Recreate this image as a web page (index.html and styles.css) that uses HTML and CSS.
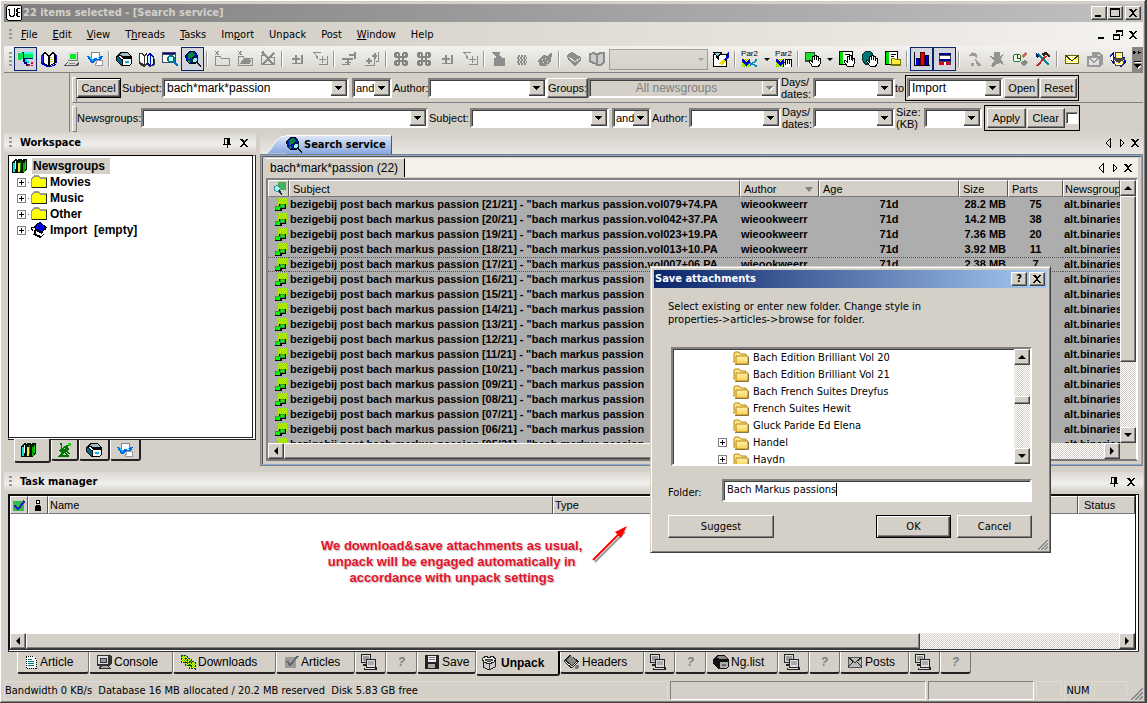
FILE: index.html
```html
<!DOCTYPE html>
<html lang="en">
<head>
<meta charset="utf-8">
<title>22 items selected - [Search service]</title>
<link rel="stylesheet" href="styles.css">
</head>
<body>
<svg class="defs" width="0" height="0" aria-hidden="true">
<defs>
<pattern id="dots" width="2" height="2" patternUnits="userSpaceOnUse"><rect width="2" height="2" fill="#ff0"/><path d="M0 0h1v1H0zM1 1h1v1H1z" fill="#5c0"/></pattern>
<pattern id="greendots" width="2" height="2" patternUnits="userSpaceOnUse"><rect width="2" height="2" fill="#2b4"/><path d="M0 0h1v1H0z" fill="#8a8"/></pattern>
<pattern id="sand" width="2" height="2" patternUnits="userSpaceOnUse"><rect width="2" height="2" fill="#fff"/><path d="M0 0h1v1H0z" fill="#fe3"/></pattern>
<linearGradient id="gold" x1="0" y1="0" x2="0" y2="1"><stop offset="0" stop-color="#fff3b0"/><stop offset="1" stop-color="#f6cf50"/></linearGradient>
<linearGradient id="tabblue" x1="0" y1="0" x2="0" y2="1"><stop offset="0" stop-color="#dde6f6"/><stop offset="1" stop-color="#86a7e0"/></linearGradient>
<symbol id="i-app" viewBox="0 0 16 16"><path d="M2 0h12l2 2v12l-2 2H2l-2-2V2z" fill="#000"/><path d="M2 1h12l1 1v12l-1 1H2l-1-1V2z" fill="#fff"/><path d="M2 4h2v6h1v1h2v-1h1V3h1v8H8v1H4v-1H3V5H2zM11 3h3v1h-2v3h2v1h-2v3h2v1h-3v-1h-1V8h1V7h-1V4h1z" fill="#000"/></symbol>
<symbol id="i-tree" viewBox="0 0 16 16"><path d="M0 2h3v7H0z" fill="#0d4"/><path d="M4 1h11v7H4z" fill="#018"/><path d="M3 2h2v6H3zM6 1h9v6H6z" fill="#0e6"/><path d="M6 1h9v2H6z" fill="#3fd"/><path d="M5 8h2v3h2v2h2v2H8v-2H6v-2H5z" fill="#008"/><path d="M7 8h2v2h2v2H9v-1H7z" fill="#0dd"/><path d="M10 13h2v2h-2zM13 11h2v2h-2zM13 14h2v1h-2z" fill="#d03"/></symbol>
<symbol id="i-book" viewBox="0 0 16 16"><path d="M0 4h2v8l5 3h3l6-3V4h-1v10l-5 2H6l-6-3z" fill="#00c"/><path d="M1 3l3-2 4 3 4-3 3 2v9l-6 3H7l-6-3z" fill="#000"/><path d="M3 3h1l3 2v9l-4-2zM12 3h1v9l-4 2V5z" fill="#fff"/><path d="M9 6h2v1H9zM9 8h3v1H9zM9 10h3v1H9z" fill="#cc3"/><path d="M0 4h2v7H0z" fill="#22f"/></symbol>
<symbol id="i-pc" viewBox="0 0 16 16"><path d="M4 1h10v9H4z" fill="#777"/><path d="M4 1h9v8H4z" fill="#ddd"/><path d="M6 3h6v5H6z" fill="#0e2"/><path d="M3 11h12v2l-2 2H0l3-4z" fill="#555"/><path d="M4 11h10l-2 3H2z" fill="#ddd"/><path d="M5 12h6v1H4z" fill="#888"/></symbol>
<symbol id="i-world" viewBox="0 0 16 16"><path d="M4 1h9v8H4z" fill="#789"/><path d="M5 2h7v6H5z" fill="#fff"/><path d="M0 5h3l2 4 2-2h2l2 2 2-4h3l-3 7h-3l-2-2-2 2H4z" fill="#06e"/><path d="M2 5h1l3 5H5zM13 5h-1l-2 4z" fill="#0df"/><path d="M9 9h7v6H8v-3h1z" fill="#99a"/><path d="M10 10h5v4H9v-1h1z" fill="#fff"/></symbol>
<symbol id="i-box" viewBox="0 0 16 16"><path d="M0 6l4-5h7l5 5v7l-3 2H6l-6-5z" fill="#000"/><path d="M1 6h1l4 4v4l-5-4z" fill="#068"/><path d="M5 2h6l3 3H7L4 4z" fill="#9bc"/><path d="M2 5h2l3 3H5z" fill="#fff"/><path d="M7 8h8v4l-2 2H7z" fill="#fff"/><path d="M9 10h4v2H9z" fill="#0bd"/></symbol>
<symbol id="i-readers" viewBox="0 0 16 16"><path d="M0 2h3l2 2 3-2v6h8v6l-5 2-3-2-3 2-5-3z" fill="#333"/><path d="M1 3h1l3 2v8l-4-2zM6 5l2-1v8l-2 1z" fill="#fff"/><path d="M8 4l3-2 4 3v8l-4 2-3-2z" fill="#00b"/><path d="M9 5l2-1v9l-2-1zM12 5l2 1v7l-2 1z" fill="#cff"/></symbol>
<symbol id="i-find" viewBox="0 0 16 16"><path d="M0 1h14v11H0z" fill="#446"/><path d="M1 4h12v7H1z" fill="#fff"/><path d="M1 2h12v1H1z" fill="#008"/><circle cx="9" cy="8" r="4" fill="#077"/><circle cx="9" cy="8" r="2.500" fill="#bff"/><path d="M11 11l2-1 3 4-1 2z" fill="#06c"/></symbol>
<symbol id="i-globe" viewBox="0 0 16 16"><path d="M4 0h5l3 2 1 3v5l-3 3H4L1 10 0 4z" fill="#002"/><path d="M4 1h5l3 3v5l-3 3H4L1 9V4z" fill="#01b"/><path d="M3 3l4-2 3 2-3 4-4 1zM3 9l3 1-1 2-2-1z" fill="#083"/><circle cx="10" cy="9" r="3.500" fill="#022"/><circle cx="10" cy="9" r="2" fill="#9ef"/><path d="M11 12l2-1 3 4-1 1z" fill="#111"/></symbol>
<symbol id="g-folder" viewBox="0 0 16 16"><path d="M1 14V5h5l1 2h8v7z" fill="none" stroke="#8c8c8c"/><path d="M1 0l4 4M5 0L1 4M3 0v4" stroke="#8c8c8c"/></symbol>
<symbol id="g-folder2" viewBox="0 0 16 16"><path d="M1 14V5h5l1 2h8v7z" fill="none" stroke="#8c8c8c"/><path d="M3 13l3-5 4-1 4 2-1 4z" fill="#8c8c8c"/><path d="M1 0l4 4M5 0L1 4M3 0v4" stroke="#8c8c8c"/></symbol>
<symbol id="g-folderx" viewBox="0 0 16 16"><path d="M1 13V4h5l1 2h7v7z" fill="none" stroke="#8c8c8c"/><path d="M2 1l12 13M14 2L2 14M3 0v4" stroke="#8c8c8c" stroke-width="2"/></symbol>
<symbol id="g-plus" viewBox="0 0 16 16"><path d="M6 4h2v3h3v2H8v3H6V9H3V7h3zM12 4h2v9H3v-1h9z" fill="#8c8c8c"/></symbol>
<symbol id="g-funnelplus" viewBox="0 0 16 16"><path d="M0 1h9L6 5v3L4 7V5L0 1M2 2l3 3 3-3z" fill="#8c8c8c" fill-rule="evenodd"/><path d="M10 5h1v3h3v1h-3v3h-1V9H7V8h3zM15 5h1v9H7v-1h8z" fill="#8c8c8c"/></symbol>
<symbol id="g-rel" viewBox="0 0 16 16"><path d="M1 7h11v2H8v2h2v1H8v2H6v-2H4v-1h2V9H1zM8 3h5V1h2v7h-2V5H8zM1 13h8v1H1z" fill="#8c8c8c"/></symbol>
<symbol id="g-pluses" viewBox="0 0 16 16"><path d="M4 7h2v2h2v2H6v2H4v-2H2V9h2zM1 14h9V8h1v7H1zM10 2h2v2h1v2h-1v2h-2V6H8V4h2zM15 1v10h-3v-1h2V1z" fill="#8c8c8c"/></symbol>
<symbol id="g-clover" viewBox="0 0 16 16"><path d="M6 6V3.500A2 2 0 1 0 4 6h8a2 2 0 1 0-2-2.500V13a2 2 0 1 0 2-3H4a2 2 0 1 0 2 3z" fill="none" stroke="#858585" stroke-width="2.600"/></symbol>
<symbol id="g-bag" viewBox="0 0 16 16"><path d="M3 7h2l3-4 3 4h3v8H3z" fill="#8c8c8c"/><path d="M0 1h9v1L6 5v3H5V5z" fill="#8c8c8c"/></symbol>
<symbol id="g-noise" viewBox="0 0 16 16"><path d="M4 5h9M3 7h10M4 9h9M3 11h10M4 13h8" stroke="#8c8c8c" stroke-width="2" stroke-dasharray="2 1"/></symbol>
<symbol id="g-hand" viewBox="0 0 16 16"><path d="M1 10l3-4 3-2 4 1 3-4 1 2-1 7-4 5H3z" fill="#8c8c8c"/><path d="M5 8h1M8 7h1M6 11h1M10 10h1M9 13h1" stroke="#eee"/></symbol>
<symbol id="g-book" viewBox="0 0 16 16"><path d="M1 4l5-3 9 5v4l-6 5-7-6z" fill="#8c8c8c"/><path d="M3 6l6 5 5-4" stroke="#e5e3df" fill="none"/></symbol>
<symbol id="g-books" viewBox="0 0 16 16"><path d="M1 3l4-1 3 2v9l-4-1-3-2zM8 4l3-2h4v9l-3 3H7" fill="#ccc" stroke="#8c8c8c" stroke-width="2"/></symbol>
<symbol id="i-filteredit" viewBox="0 0 16 16"><path d="M0 3h14v13H0z" fill="#000"/><path d="M1 4h12v11H1z" fill="#fff"/><path d="M0 1h9v1L6 5v4L3 7V5L0 2z" fill="#000"/><path d="M2 2h5L5 5H4z" fill="#7dd"/><path d="M8 12l5-6 2-5h1v5l-4 5z" fill="#01c"/><path d="M6 13l4-5 3 2-3 4z" fill="#ed0"/></symbol>
<symbol id="i-par" viewBox="0 0 16 9"><path d="M0 1h8v8H0z" fill="url(#dots)"/><path d="M1 1l3 3 3-3h1v3L4 8 0 4V1z" fill="#00d"/><path d="M8 5l7 3M8 7l7-5" stroke="#08a" stroke-width="1.500"/><path d="M13 1h2v2h-2zM13 7h2v2h-2z" fill="#08a"/></symbol>
<symbol id="i-par-h" viewBox="0 0 16 9"><path d="M0 1h8v8H0z" fill="url(#dots)"/><path d="M1 1l3 3 3-3h1v3L4 8 0 4V1z" fill="#00d"/><path d="M7 9V4h2V1h7v8z" fill="#000"/><path d="M8 9V5h1v2h1V2h1v4h1V2h1v4h1V2h1v7z" fill="#fff"/></symbol>
<symbol id="i-hand" viewBox="0 0 16 16"><path d="M0 1h10v10H0z" fill="#353"/><path d="M1 2h8v7H1z" fill="#2d3"/><path d="M7 15L4 10l1-1 2 2V5h2v4-5h2v5-4h2v5-3h2v6l-2 3z" fill="#fff" stroke="#000"/></symbol>
<symbol id="i-handp" viewBox="0 0 16 16"><path d="M0 0h14v14H0z" fill="#000"/><path d="M1 1h12v12H1z" fill="#fff"/><path d="M1 1h3v12H1z" fill="#0d0"/><path d="M6 3h5v1H6z" fill="#000"/><path d="M8 15L5 10l1-1 2 2V5h2v4-5h2v5-4h1v5-3h2v6l-1 3z" fill="#fff" stroke="#000"/></symbol>
<symbol id="i-handg" viewBox="0 0 16 16"><path d="M0 4l4-4 5 1 3 4-3 8-5 1-3-4z" fill="#077" stroke="#033"/><path d="M8 15L4 10l1-1 2 2V5h2v4-5h2v5-4h2v5-3h2v6l-2 3z" fill="#fff" stroke="#000"/></symbol>
<symbol id="i-pfold" viewBox="0 0 16 16"><path d="M0 0h13v14H0z" fill="#000"/><path d="M1 1h11v12H1z" fill="#fff"/><path d="M1 1h3v12H1z" fill="#0d0"/><path d="M6 3h5v1H6zM6 5h3v1H6z" fill="#000"/><path d="M6 7h3l1 1h6v7H6z" fill="#770"/><path d="M7 8h2l1 1h5v4H7z" fill="#fe3"/></symbol>
<symbol id="i-bars" viewBox="0 0 16 16"><path d="M0 1h1v13h15v1H0z" fill="#000"/><path d="M2 7h4v7H2zM11 4h4v10h-4z" fill="#003"/><path d="M2 8h3v6H2zM12 5h2v9h-2z" fill="#00c"/><path d="M6 1h5v13H6z" fill="#500"/><path d="M7 2h3v12H7z" fill="#e00"/></symbol>
<symbol id="i-pane" viewBox="0 0 16 16"><path d="M2 2h12v12H2z" fill="#446"/><path d="M3 5h10v3H3z" fill="#fff"/><path d="M2 2h12v2H2zM2 8h12v2H2z" fill="#008"/><path d="M3 11h10v3H3z" fill="#d01"/><path d="M7 11h2v3H7z" fill="#fff"/></symbol>
<symbol id="g-net" viewBox="0 0 16 16"><path d="M2 5l4-4 5 2v4l-3-2zM9 7l5 6h-4zM5 12h3v3H5zM11 13h4v2h-4z" fill="#a09c98"/></symbol>
<symbol id="g-bug" viewBox="0 0 16 16"><path d="M5 1h6v4l4-2-3 5 1 2 2 4-4-2-3 1-4 3-2-1 3-5-4-5 4 1z" fill="#929292"/></symbol>
<symbol id="i-clock" viewBox="0 0 16 16"><circle cx="5" cy="7" r="4.500" fill="#272"/><circle cx="5" cy="7" r="3.500" fill="#efe"/><path d="M5 4h1v3h2v1H5z" fill="#a00"/><path d="M10 4l4-3 1 2-4 4z" fill="#c66"/><path d="M8 12l5-3 3 3-4 3z" fill="#888"/></symbol>
<symbol id="i-tools" viewBox="0 0 16 16"><path d="M3 3l11 11" stroke="#089" stroke-width="2"/><path d="M11 5L2 15" stroke="#a33" stroke-width="2"/><path d="M7 2l4-1 4 4-1 2-3-3-3 1z" fill="#321"/><path d="M1 2l3 3-1 2-2-1z" fill="#026"/></symbol>
<symbol id="i-mail" viewBox="0 0 16 16"><path d="M1 4h14v9H1z" fill="#660"/><path d="M2 5h12v7H2z" fill="url(#sand)"/><path d="M1 4l7 6 7-6" fill="none" stroke="#330"/></symbol>
<symbol id="g-mail" viewBox="0 0 16 16"><path d="M5 2h7l3 3v8h-2M1 6h12v9H1zM1 6l6 5 6-5M6 2v5M9 1v5M7 4h4" fill="none" stroke="#999" stroke-width="1.500"/></symbol>
<symbol id="i-mails" viewBox="0 0 16 16"><path d="M0 4l4-3v5l11 0 1 6-5 4-9-4z" fill="#00a"/><path d="M1 5l2-2v7l-2-1z" fill="#fff"/><path d="M5 1h8v7H5z" fill="#444"/><path d="M6 2h6v5H6z" fill="url(#sand)"/><path d="M3 7h12l-2 8H5z" fill="#444"/><path d="M4 9l5 3 5-3-2 5H6z" fill="url(#sand)"/></symbol>
<symbol id="i-books" viewBox="0 0 16 16"><path d="M0 4l3-3h2v1l2-1h3v1l2-1h3v10l-4 4H0z" fill="#010"/><path d="M1 5h2v9H1z" fill="#1dd"/><path d="M3 3h1v8H3z" fill="#fff"/><path d="M6 5h2v9H6z" fill="#ee4"/><path d="M8 3h1v9H8z" fill="#080"/><path d="M11 5h2v9h-2z" fill="#0a0"/><path d="M13 3h1v8h-1z" fill="#0d0"/></symbol>
<symbol id="i-folder" viewBox="0 0 16 16"><path d="M0 4l3-3h4l2 2h7v11H0z" fill="#998"/><path d="M1 5l2-2h4l2 2h6v8H1z" fill="#ff0"/><path d="M1 14h15V4h-1v9H1z" fill="#222"/></symbol>
<symbol id="i-import" viewBox="0 0 16 16"><path d="M5 2l4-2 7 5-4 9-3 2-6-3-2-5z" fill="#000"/><path d="M6 2l3-1 5 4-3 5-6-3z" fill="#00e"/><path d="M5 9l6 3 3-5v3l-4 4-5-2z" fill="#fff"/><path d="M0 5h5v3l-1 1v4H2V8H0z" fill="#000"/><path d="M1 6h3v2H3v4H2V7H1z" fill="#fff"/></symbol>
<symbol id="i-sat" viewBox="0 0 16 16"><path d="M4 1l1 7 7-1M12 2l-5 8M6 10l6-3M3 8l3 3-3 3h9M8 10l3 4M12 3l-6 3M10 9l2 3" fill="none" stroke="#070" stroke-width="1.600"/><path d="M11 1h3v3h-3z" fill="#2c2"/></symbol>
<symbol id="i-msg" viewBox="0 0 16 16"><path d="M5 1h9v9H5z" fill="url(#dots)"/><path d="M6 7h7v6H9v2H2v-5h4z" fill="#000"/><path d="M7 7h5v5H7z" fill="#393"/><path d="M8 8h3v3H8z" fill="#0f0"/><path d="M2 10h5v4H2z" fill="#393"/><path d="M3 11h4v3H3z" fill="#0f0"/></symbol>
<symbol id="i-msgfind" viewBox="0 0 16 16"><path d="M6 1h8v9H6z" fill="url(#greendots)"/><circle cx="5" cy="8" r="3.500" fill="#488"/><circle cx="5" cy="8" r="2.500" fill="#9ff"/><path d="M7 10l3 5" stroke="#024" stroke-width="1.600"/></symbol>
<symbol id="i-check" viewBox="0 0 16 16"><path d="M2 3h11v11H2z" fill="url(#greendots)"/><path d="M3 8l4 4 7-9" fill="none" stroke="#22b" stroke-width="2.400"/></symbol>
<symbol id="i-info" viewBox="0 0 16 16"><path d="M6 2h4v4H6zM5 7h5v1H9v1h2v5H5V9h1z" fill="#000"/><path d="M7 3h2v2H7z" fill="#fff"/></symbol>
<symbol id="i-pin" viewBox="0 0 10 10"><path d="M2 0h6v6h1v1H6v3H5V7H1V6h1zM3 1v5h2V1z" fill="#000" fill-rule="evenodd"/></symbol>
<symbol id="i-x" viewBox="0 0 8 8"><path d="M0 0h2l2 2 2-2h2L5 4l3 4H6L4 5 2 8H0l3-4z" fill="#000"/></symbol>
<symbol id="i-lt" viewBox="0 0 10 10"><path d="M7 1v8L3 5z" fill="none" stroke="#000"/></symbol>
<symbol id="i-gt" viewBox="0 0 10 10"><path d="M3 1v8l4-4z" fill="none" stroke="#000"/></symbol>
<symbol id="i-min" viewBox="0 0 10 10"><path d="M1 7h6v2H1z" fill="#000"/></symbol>
<symbol id="i-max" viewBox="0 0 10 10"><path d="M0 0h10v9H0zM1 2v6h8V2z" fill="#000" fill-rule="evenodd"/></symbol>
<symbol id="i-rest" viewBox="0 0 10 10"><path d="M3 0h7v6H8V5h1V2H4v1H3zM0 4h7v6H0zM1 6v3h5V6z" fill="#000" fill-rule="evenodd"/></symbol>
<symbol id="i-doc" viewBox="0 0 16 16"><path d="M3 2h7l3 3v9H3z" fill="#fff" stroke="#000" stroke-dasharray="1 1"/><path d="M5 5h4M5 7h6M5 9h6M5 11h6" stroke="#077"/></symbol>
<symbol id="i-mon" viewBox="0 0 16 16"><path d="M1 1h12l3 1v8l-3 2 2 3H3l1-3H1z" fill="#333"/><path d="M2 2h10v8H2z" fill="#ddd"/><path d="M4 4h7v5H4z" fill="#333"/><path d="M5 5h5v3H5z" fill="#99a"/><path d="M6 12h6l1 2H5z" fill="#aaa"/></symbol>
<symbol id="i-dl" viewBox="0 0 16 16"><path d="M1 1l6 1v7l-6-1zM5 4l6 1v7l-6-1zM9 7l6 1v7l-6-1z" fill="url(#dots)" stroke="#043" stroke-dasharray="2 1"/></symbol>
<symbol id="i-gcheck" viewBox="0 0 16 16"><path d="M2 3h11v11H2z" fill="#9a9a9a"/><path d="M4 7l3 4 8-9" fill="none" stroke="#666" stroke-width="2"/></symbol>
<symbol id="i-nets" viewBox="0 0 16 16"><path d="M0 0h10v9H0zM2 10h3v2H2z" fill="#222"/><path d="M1 1h8v7H1z" fill="#ddd"/><path d="M2 2h6v5H2z" fill="#999"/><path d="M5 5h10v8h1v3H3v-2h2z" fill="#222"/><path d="M6 6h8v7H6z" fill="#ddd"/><path d="M7 7h6v4H7z" fill="#aaa"/><path d="M4 14h10v1H4z" fill="#ddd"/></symbol>
<symbol id="i-save" viewBox="0 0 16 16"><path d="M1 1h14v14H1z" fill="#222"/><path d="M4 2h8v6H4z" fill="#eee"/><path d="M5 3h6v1H5zM5 5h6v1H5z" fill="#777"/><path d="M4 10h7v4H4z" fill="#aaa"/></symbol>
<symbol id="i-unpack" viewBox="0 0 16 16"><path d="M2 6l6 3 6-3v6l-6 3-6-3z" fill="#ccc" stroke="#222"/><path d="M1 4l4-3 3 2 3-2 4 3-2 3-5 2-5-2z" fill="#eee" stroke="#222"/><path d="M4 5l4-1 4 1-4 2zM8 9v6" fill="#888" stroke="#444"/></symbol>
<symbol id="i-head" viewBox="0 0 16 16"><path d="M0 6l6-5 9 6-6 7H7L0 8z" fill="#222"/><path d="M2 6l5-4 6 5-5 4z" fill="#888"/><path d="M1 7l7 5 5-4v1l-5 4-7-5z" fill="#eee"/><circle cx="13" cy="13" r="2" fill="#777"/></symbol>
<symbol id="i-env" viewBox="0 0 16 16"><path d="M1 3h14v11H1z" fill="#555"/><path d="M2 4h12v9H2z" fill="#bbb"/><path d="M1 3l7 6 7-6M1 13l5-5M15 13l-5-5" fill="none" stroke="#222"/></symbol>
<symbol id="i-ghost-box" viewBox="0 0 16 16"><path d="M0 6l4-5h7l5 5v7l-3 2H6l-6-5z" fill="#111"/><path d="M5 2h6l3 3H7L4 4z" fill="#888"/><path d="M7 8h8v4l-2 2H7z" fill="#aaa"/><path d="M9 10h4v2H9z" fill="#666"/></symbol>
<symbol id="i-gold" viewBox="0 0 16 14"><path d="M1 12V2l1-1h4l2 2h5v2" fill="#fbe48a" stroke="#b8860b"/><path d="M3 13V5h12v8z" fill="url(#gold)" stroke="#b8860b"/><path d="M2 13.500h13.500V6" fill="none" stroke="#8a7640"/></symbol>
</defs>
</svg>

<div class="window">
  <header class="titlebar">
    <svg class="ic"><use href="#i-app"/></svg>
    <h1>22 items selected - [Search service]</h1>
    <div class="winbtns">
      <button class="wb" aria-label="Minimize"><svg><use href="#i-min"/></svg></button>
      <button class="wb" aria-label="Maximize"><svg><use href="#i-max"/></svg></button>
      <button class="wb wb-close" aria-label="Close"><svg class="x"><use href="#i-x"/></svg></button>
    </div>
  </header>

  <nav class="menubar">
    <span class="grip"></span>
    <a href="#"><u>F</u>ile</a><a href="#"><u>E</u>dit</a><a href="#"><u>V</u>iew</a><a href="#">T<u>h</u>reads</a><a href="#"><u>T</u>asks</a><a href="#">Im<u>p</u>ort</a><a href="#">Unpack</a><a href="#">Post</a><a href="#"><u>W</u>indow</a><a href="#">Help</a>
    <div class="mdibtns">
      <button aria-label="Minimize document"><svg><use href="#i-min"/></svg></button>
      <button aria-label="Restore document"><svg><use href="#i-rest"/></svg></button>
      <button aria-label="Close document"><svg class="x"><use href="#i-x"/></svg></button>
    </div>
  </nav>

  <div class="toolbar" role="toolbar" aria-label="Main">
    <span class="grip"></span>
    <button class="tb on" aria-label="Workspace"><svg><use href="#i-tree"/></svg></button>
    <button class="tb" aria-label="Book"><svg><use href="#i-book"/></svg></button>
    <button class="tb" aria-label="Console"><svg><use href="#i-pc"/></svg></button>
    <button class="tb" aria-label="Web"><svg><use href="#i-world"/></svg></button>
    <span class="sep"></span>
    <button class="tb" aria-label="Box"><svg><use href="#i-box"/></svg></button>
    <button class="tb" aria-label="Readers"><svg><use href="#i-readers"/></svg></button>
    <button class="tb" aria-label="Find"><svg><use href="#i-find"/></svg></button>
    <button class="tb on" aria-label="Search service"><svg><use href="#i-globe"/></svg></button>
    <span class="sep"></span>
    <button class="tb" aria-label="New folder" disabled><svg><use href="#g-folder"/></svg></button>
    <button class="tb" aria-label="Edit folder" disabled><svg><use href="#g-folder2"/></svg></button>
    <button class="tb" aria-label="Delete folder" disabled><svg><use href="#g-folderx"/></svg></button>
    <span class="sep"></span>
    <button class="tb" aria-label="Add" disabled><svg><use href="#g-plus"/></svg></button>
    <button class="tb" aria-label="Add filter" disabled><svg><use href="#g-funnelplus"/></svg></button>
    <span class="sep"></span>
    <button class="tb" aria-label="Relations" disabled><svg><use href="#g-rel"/></svg></button>
    <button class="tb" aria-label="Add all" disabled><svg><use href="#g-pluses"/></svg></button>
    <span class="sep"></span>
    <button class="tb" aria-label="Group" disabled><svg><use href="#g-clover"/></svg></button>
    <button class="tb" aria-label="Ungroup" disabled><svg><use href="#g-clover"/></svg></button>
    <button class="tb" aria-label="Add item" disabled><svg><use href="#g-plus"/></svg></button>
    <button class="tb" aria-label="Add item filter" disabled><svg><use href="#g-funnelplus"/></svg></button>
    <span class="sep"></span>
    <button class="tb" aria-label="Bag" disabled><svg><use href="#g-bag"/></svg></button>
    <button class="tb" aria-label="Noise" disabled><svg><use href="#g-noise"/></svg></button>
    <button class="tb" aria-label="Grab" disabled><svg><use href="#g-hand"/></svg></button>
    <span class="sep"></span>
    <button class="tb" aria-label="Headers" disabled><svg><use href="#g-book"/></svg></button>
    <button class="tb" aria-label="Bodies" disabled><svg><use href="#g-books"/></svg></button>
    <select class="tbselect" aria-label="Filter" disabled><option></option></select>
    <button class="tb" aria-label="Edit filter"><svg><use href="#i-filteredit"/></svg></button>
    <span class="sep"></span>
    <button class="tb par"><span>Par2</span><svg><use href="#i-par"/></svg></button>
    <button class="drop" aria-label="Par2 options"></button>
    <button class="tb par"><span>Par2</span><svg><use href="#i-par-h"/></svg></button>
    <span class="sep"></span>
    <button class="tb" aria-label="Stop"><svg><use href="#i-hand"/></svg></button>
    <button class="drop" aria-label="Stop options"></button>
    <button class="tb" aria-label="Stop page"><svg><use href="#i-handp"/></svg></button>
    <button class="tb" aria-label="Stop all"><svg><use href="#i-handg"/></svg></button>
    <button class="tb" aria-label="Open folder"><svg><use href="#i-pfold"/></svg></button>
    <span class="sep"></span>
    <button class="tb on" aria-label="Statistics"><svg><use href="#i-bars"/></svg></button>
    <button class="tb on" aria-label="Task pane"><svg><use href="#i-pane"/></svg></button>
    <span class="sep"></span>
    <button class="tb" aria-label="Network" disabled><svg><use href="#g-net"/></svg></button>
    <button class="tb" aria-label="Debug" disabled><svg><use href="#g-bug"/></svg></button>
    <button class="tb" aria-label="Schedule"><svg><use href="#i-clock"/></svg></button>
    <button class="tb" aria-label="Settings"><svg><use href="#i-tools"/></svg></button>
    <span class="sep"></span>
    <button class="tb" aria-label="Mail"><svg><use href="#i-mail"/></svg></button>
    <button class="tb" aria-label="Forward" disabled><svg><use href="#g-mail"/></svg></button>
    <button class="tb" aria-label="Mail book"><svg><use href="#i-mails"/></svg></button>
    <button class="more" aria-label="More"><svg viewBox="0 0 10 22"><path d="M1 3v4l3-2zM5 3v4l3-2z" fill="#000"/><path d="M3 14h6v1H3zM4 17h5l-3 3z" fill="#fff"/><path d="M2 13h6v1H2zM2 16h6l-3 3z" fill="#000"/></svg></button>
  </div>

  <form class="bands">
    <div class="band band1">
      <button type="button" class="btn default">Cancel</button>
      <label for="subj1">Subject:</label>
      <select id="subj1" class="combo"><option>bach*mark*passion</option></select>
      <select class="combo and" aria-label="Operator"><option>and</option></select>
      <label for="auth1">Author:</label>
      <select id="auth1" class="combo"><option></option></select>
      <button type="button" class="btn">Groups:</button>
      <select class="combo off" aria-label="Groups" disabled><option>All newsgroups</option></select>
      <label for="days1">Days/<br>dates:</label>
      <select id="days1" class="combo"><option></option></select>
      <span class="to">to</span>
      <div class="boxed">
        <select class="combo grow" aria-label="Preset"><option>Import</option></select>
        <button type="button" class="btn">Open</button>
        <button type="button" class="btn">Reset</button>
      </div>
    </div>
    <div class="band band2">
      <label for="news">Newsgroups:</label>
      <select id="news" class="combo"><option></option></select>
      <label for="subj2">Subject:</label>
      <select id="subj2" class="combo"><option></option></select>
      <select class="combo and" aria-label="Operator"><option>and</option></select>
      <label for="auth2">Author:</label>
      <select id="auth2" class="combo"><option></option></select>
      <label for="days2">Days/<br>dates:</label>
      <select id="days2" class="combo"><option></option></select>
      <label for="size">Size:<br>(KB)</label>
      <select id="size" class="combo"><option></option></select>
      <div class="boxed">
        <button type="button" class="btn grow">Apply</button>
        <button type="button" class="btn grow">Clear</button>
        <input type="checkbox" class="chk" aria-label="Auto apply">
      </div>
    </div>
  </form>

  <main class="work">
    <section class="side">
      <div class="panehead"><span class="grip"></span><h2>Workspace</h2>
        <button aria-label="Pin"><svg><use href="#i-pin"/></svg></button><button aria-label="Close pane"><svg class="x"><use href="#i-x"/></svg></button></div>
      <div class="treebox">
        <ul class="tree">
          <li class="root"><svg class="ic"><use href="#i-books"/></svg><span class="sel">Newsgroups</span></li>
          <li><button class="exp" aria-label="Expand Movies"></button><i class="twig"></i><svg class="ic"><use href="#i-folder"/></svg><span>Movies</span></li>
          <li><button class="exp" aria-label="Expand Music"></button><i class="twig"></i><svg class="ic"><use href="#i-folder"/></svg><span>Music</span></li>
          <li><button class="exp" aria-label="Expand Other"></button><i class="twig"></i><svg class="ic"><use href="#i-folder"/></svg><span>Other</span></li>
          <li><button class="exp" aria-label="Expand Import"></button><i class="twig"></i><svg class="ic"><use href="#i-import"/></svg><span>Import&nbsp; [empty]</span></li>
        </ul>
      </div>
      <div class="sidetabs">
        <button class="stab active" aria-label="Newsgroups"><svg class="ic"><use href="#i-books"/></svg></button>
        <button class="stab narrow" aria-label="Servers"><svg class="ic"><use href="#i-sat"/></svg></button>
        <button class="stab" aria-label="Boxes"><svg class="ic"><use href="#i-box"/></svg></button>
        <button class="stab" aria-label="Web"><svg class="ic"><use href="#i-world"/></svg></button>
      </div>
    </section>

    <section class="doc">
      <div class="doctabs">
        <button class="doctab"><svg class="slope" viewBox="0 0 22 20"><path d="M0 20C8 16 10 1 20 1h2v19z" fill="url(#tabblue)"/><path d="M0 20C8 16 10 1 20 1h2" fill="none" stroke="#fff"/></svg><span class="doctab-body"><svg class="ic"><use href="#i-globe"/></svg><span>Search service</span></span></button>
        <div class="navs"><button aria-label="Previous"><svg><use href="#i-lt"/></svg></button><button aria-label="Next"><svg><use href="#i-gt"/></svg></button><button aria-label="Close tab"><svg class="x"><use href="#i-x"/></svg></button></div>
      </div>
      <div class="docframe">
        <div class="subtabs">
          <button class="subtab">bach*mark*passion (22)</button>
          <div class="navs"><button aria-label="Previous search"><svg><use href="#i-lt"/></svg></button><button aria-label="Next search"><svg><use href="#i-gt"/></svg></button><button aria-label="Close search"><svg class="x"><use href="#i-x"/></svg></button></div>
        </div>
        <div class="listbox">
          <div class="rows">
            <table class="articles">
              <colgroup><col class="c-ic"><col class="c-sub"><col class="c-aut"><col class="c-age"><col class="c-size"><col class="c-parts"><col></colgroup>
              <thead><tr><th><svg class="ic"><use href="#i-msgfind"/></svg></th><th>Subject</th><th class="sorted">Author</th><th>Age</th><th>Size</th><th>Parts</th><th>Newsgroups</th></tr></thead>
              <tbody>
                <tr><td><svg class="ic"><use href="#i-msg"/></svg></td><td>bezigebij post bach markus passion [21/21] - "bach markus passion.vol079+74.PA</td><td>wieookweerr</td><td>71d</td><td>28.2 MB</td><td>75</td><td>alt.binaries</td></tr>
                <tr><td><svg class="ic"><use href="#i-msg"/></svg></td><td>bezigebij post bach markus passion [20/21] - "bach markus passion.vol042+37.PA</td><td>wieookweerr</td><td>71d</td><td>14.2 MB</td><td>38</td><td>alt.binaries</td></tr>
                <tr><td><svg class="ic"><use href="#i-msg"/></svg></td><td>bezigebij post bach markus passion [19/21] - "bach markus passion.vol023+19.PA</td><td>wieookweerr</td><td>71d</td><td>7.36 MB</td><td>20</td><td>alt.binaries</td></tr>
                <tr><td><svg class="ic"><use href="#i-msg"/></svg></td><td>bezigebij post bach markus passion [18/21] - "bach markus passion.vol013+10.PA</td><td>wieookweerr</td><td>71d</td><td>3.92 MB</td><td>11</td><td>alt.binaries</td></tr>
                <tr class="focus"><td><svg class="ic"><use href="#i-msg"/></svg></td><td>bezigebij post bach markus passion [17/21] - "bach markus passion.vol007+06.PA</td><td>wieookweerr</td><td>71d</td><td>2.38 MB</td><td>7</td><td>alt.binaries</td></tr>
                <tr><td><svg class="ic"><use href="#i-msg"/></svg></td><td>bezigebij post bach markus passion [16/21] - "bach markus passion</td><td></td><td></td><td></td><td></td><td>alt.binaries</td></tr>
                <tr><td><svg class="ic"><use href="#i-msg"/></svg></td><td>bezigebij post bach markus passion [15/21] - "bach markus passion</td><td></td><td></td><td></td><td></td><td>alt.binaries</td></tr>
                <tr><td><svg class="ic"><use href="#i-msg"/></svg></td><td>bezigebij post bach markus passion [14/21] - "bach markus passion</td><td></td><td></td><td></td><td></td><td>alt.binaries</td></tr>
                <tr><td><svg class="ic"><use href="#i-msg"/></svg></td><td>bezigebij post bach markus passion [13/21] - "bach markus passion</td><td></td><td></td><td></td><td></td><td>alt.binaries</td></tr>
                <tr><td><svg class="ic"><use href="#i-msg"/></svg></td><td>bezigebij post bach markus passion [12/21] - "bach markus passion</td><td></td><td></td><td></td><td></td><td>alt.binaries</td></tr>
                <tr><td><svg class="ic"><use href="#i-msg"/></svg></td><td>bezigebij post bach markus passion [11/21] - "bach markus passion</td><td></td><td></td><td></td><td></td><td>alt.binaries</td></tr>
                <tr><td><svg class="ic"><use href="#i-msg"/></svg></td><td>bezigebij post bach markus passion [10/21] - "bach markus passion</td><td></td><td></td><td></td><td></td><td>alt.binaries</td></tr>
                <tr><td><svg class="ic"><use href="#i-msg"/></svg></td><td>bezigebij post bach markus passion [09/21] - "bach markus passion</td><td></td><td></td><td></td><td></td><td>alt.binaries</td></tr>
                <tr><td><svg class="ic"><use href="#i-msg"/></svg></td><td>bezigebij post bach markus passion [08/21] - "bach markus passion</td><td></td><td></td><td></td><td></td><td>alt.binaries</td></tr>
                <tr><td><svg class="ic"><use href="#i-msg"/></svg></td><td>bezigebij post bach markus passion [07/21] - "bach markus passion</td><td></td><td></td><td></td><td></td><td>alt.binaries</td></tr>
                <tr><td><svg class="ic"><use href="#i-msg"/></svg></td><td>bezigebij post bach markus passion [06/21] - "bach markus passion</td><td></td><td></td><td></td><td></td><td>alt.binaries</td></tr>
                <tr><td><svg class="ic"><use href="#i-msg"/></svg></td><td>bezigebij post bach markus passion [05/21] - "bach markus passion</td><td></td><td></td><td></td><td></td><td>alt.binaries</td></tr>
              </tbody>
            </table>
          </div>
          <div class="vbar"><button class="sb up" aria-label="Scroll up"></button><span class="thumb vt-list"></span><button class="sb down" aria-label="Scroll down"></button></div>
          <div class="hbar"><button class="sb left" aria-label="Scroll left"></button><span class="thumb ht-list"></span><button class="sb right" aria-label="Scroll right"></button></div>
          <span class="corner"></span>
        </div>
      </div>
    </section>
  </main>

  <section class="tasks">
    <div class="panehead"><span class="grip"></span><h2>Task manager</h2>
      <button aria-label="Pin tasks"><svg><use href="#i-pin"/></svg></button><button aria-label="Close tasks"><svg class="x"><use href="#i-x"/></svg></button></div>
    <div class="taskbox">
      <table class="tasktable">
        <colgroup><col class="t-a"><col class="t-b"><col class="t-name"><col><col class="t-st"></colgroup>
        <thead><tr><th><svg class="ic"><use href="#i-check"/></svg></th><th><svg class="ic"><use href="#i-info"/></svg></th><th>Name</th><th>Type</th><th>Status</th></tr></thead>
      </table>
      <div class="taskbody">
        <p class="note">We download&amp;save attachments as usual,<br>unpack will be engaged automatically in<br>accordance with unpack settings</p>
        <svg class="arrow" viewBox="0 0 44 44"><path d="M4 38L34 8" stroke="#999" stroke-width="2" transform="translate(2 2)"/><path d="M4 38L32 10" stroke="#f00" stroke-width="2"/><path d="M38 4L26 10l6 6z" fill="#f00"/></svg>
      </div>
      <div class="hbar"><button class="sb left" aria-label="Scroll tasks left"></button><span class="thumb ht-task"></span><button class="sb right" aria-label="Scroll tasks right"></button></div>
    </div>
    <div class="bottabs">
      <button class="bt w-art"><svg class="ic"><use href="#i-doc"/></svg>Article</button>
      <button class="bt w-con"><svg class="ic"><use href="#i-mon"/></svg>Console</button>
      <button class="bt w-dl"><svg class="ic"><use href="#i-dl"/></svg>Downloads</button>
      <button class="bt w-arts"><svg class="ic"><use href="#i-gcheck"/></svg>Articles</button>
      <button class="bt w-i" aria-label="Servers"><svg class="ic"><use href="#i-nets"/></svg></button>
      <button class="bt w-i q">?</button>
      <button class="bt w-save"><svg class="ic"><use href="#i-save"/></svg>Save</button>
      <button class="bt w-unp active"><svg class="ic"><use href="#i-unpack"/></svg>Unpack</button>
      <button class="bt w-con tight"><svg class="ic"><use href="#i-head"/></svg>Headers</button>
      <button class="bt w-i" aria-label="Header servers"><svg class="ic"><use href="#i-nets"/></svg></button>
      <button class="bt w-i q">?</button>
      <button class="bt w-ng"><svg class="ic"><use href="#i-ghost-box"/></svg>Ng.list</button>
      <button class="bt w-i" aria-label="List servers"><svg class="ic"><use href="#i-nets"/></svg></button>
      <button class="bt w-i q">?</button>
      <button class="bt w-post"><svg class="ic"><use href="#i-env"/></svg>Posts</button>
      <button class="bt w-i" aria-label="Post servers"><svg class="ic"><use href="#i-nets"/></svg></button>
      <button class="bt w-i q">?</button>
    </div>
  </section>

  <footer class="status">
    <span class="sp flat main">Bandwidth 0 KB/s&nbsp; Database 16 MB allocated / 20.2 MB reserved&nbsp; Disk 5.83 GB free</span>
    <span class="sp s1"></span><span class="sp s2"></span><span class="sp flat s3"></span><span class="sp flat s4">NUM</span><span class="sp flat s5"></span>
    <svg class="sizegrip" viewBox="0 0 14 14"><path d="M1 14L14 1M5 14l9-9M9 14l5-5" stroke="#fff"/><path d="M2 14L14 2M6 14l8-8M10 14l4-4" stroke="#808080" stroke-width="1.600"/></svg>
  </footer>
</div>

<div class="dialog" role="dialog" aria-labelledby="dlgtitle">
  <div class="dlgtitle"><h2 id="dlgtitle">Save attachments</h2>
    <button class="wb">?</button><button class="wb wb-close" aria-label="Close dialog"><svg class="x"><use href="#i-x"/></svg></button></div>
  <div class="dlgbody">
    <p>Select existing or enter new folder. Change style in<br>properties-&gt;articles-&gt;browse for folder.</p>
    <div class="folders">
      <ul>
        <li><svg class="fi"><use href="#i-gold"/></svg>Bach Edition Brilliant Vol 20</li>
        <li><svg class="fi"><use href="#i-gold"/></svg>Bach Edition Brilliant Vol 21</li>
        <li><svg class="fi"><use href="#i-gold"/></svg>Bach French Suites Dreyfus</li>
        <li><svg class="fi"><use href="#i-gold"/></svg>French Suites Hewit</li>
        <li><svg class="fi"><use href="#i-gold"/></svg>Gluck Paride Ed Elena</li>
        <li class="has"><button class="exp" aria-label="Expand Handel"></button><svg class="fi"><use href="#i-gold"/></svg>Handel</li>
        <li class="has"><button class="exp" aria-label="Expand Haydn"></button><svg class="fi"><use href="#i-gold"/></svg>Haydn</li>
      </ul>
      <div class="vbar"><button class="sb up" aria-label="Folders up"></button><span class="thumb vt-dlg"></span><button class="sb down" aria-label="Folders down"></button></div>
    </div>
    <div class="frow"><label for="folder">Folder:</label><div class="field"><input id="folder" type="text" value="Bach Markus passions" size="19"><span class="caret"></span></div></div>
    <div class="dlgbtns"><button class="btn suggest">Suggest</button><button class="btn default">OK</button><button class="btn">Cancel</button></div>
  </div>
  <svg class="sizegrip dlggrip" viewBox="0 0 14 14"><path d="M1 14L14 1M5 14l9-9M9 14l5-5" stroke="#fff"/><path d="M2 14L14 2M6 14l8-8M10 14l4-4" stroke="#808080" stroke-width="1.600"/></svg>
</div>
</body>
</html>
```

FILE: styles.css
```css
:root {
  --face: #d4d0c8;
  --shadow: #808080;
  --dark: #404040;
  --ui: "DejaVu Sans Condensed", "Noto Sans", sans-serif;
  --arial: "Liberation Sans", Arial, sans-serif;
}
* { box-sizing: border-box; }
html, body { height: 100%; }
body { margin: 0; background: var(--face); font: 11px/14px var(--arial); color: #000; overflow: hidden; }
h1, h2, p, ul { margin: 0; padding: 0; font-weight: normal; }
h1, h2 { font-size: 11px; line-height: 14px; }
ul { list-style: none; }
button, select, input { font: inherit; color: inherit; margin: 0; padding: 0; border: 0; background: none; border-radius: 0; outline: none; }
svg { display: block; flex: none; shape-rendering: crispEdges; }
.defs { position: absolute; }
.ic { width: 16px; height: 16px; }
.grow { flex: 1; }

.window { height: 100vh; display: flex; flex-direction: column; padding: 4px 2px 2px 4px; border-style: solid; border-width: 0 2px 1px 0; border-color: var(--dark); box-shadow: inset 1px 1px #fff, inset -1px -1px var(--shadow); }

.titlebar { display: flex; align-items: center; flex: none; height: 18px; padding: 0 2px; background: linear-gradient(90deg, #808080, #c0c0c0); }
.titlebar h1 { flex: 1; padding-left: 1px; font-family: var(--ui); font-weight: bold; color: var(--face); white-space: nowrap; }
.winbtns { display: flex; }
.wb { width: 16px; height: 14px; display: flex; align-items: center; justify-content: center; background: var(--face); border: 1px solid; border-color: #fff var(--dark) var(--dark) #fff; box-shadow: inset -1px -1px var(--shadow); font-weight: bold; line-height: 12px; }
.wb svg { width: 10px; height: 10px; }
.wb-close { margin-left: 2px; }

.menubar { display: flex; align-items: center; flex: none; height: 24px; padding: 2px 0 0 5px; background: linear-gradient(90deg, var(--face) 20%, #e9e6e0 75%, #f5f3f0); font-family: var(--ui); }
.menubar a { color: #000; text-decoration: none; white-space: nowrap; margin-right: 15px; }
.menubar .grip { margin-right: 9px; }
.mdibtns { display: flex; align-items: center; gap: 6px; margin-left: auto; padding-right: 6px; }
.mdibtns svg { width: 10px; height: 10px; }
.grip { width: 3px; height: 12px; flex: none; background: repeating-linear-gradient(#999 0 2px, transparent 2px 4px); }

.toolbar { display: flex; align-items: center; flex: none; height: 27px; padding-left: 5px; background: linear-gradient(#f3f2ef, #d8d5ce); border-bottom: 1px solid var(--shadow); }
.toolbar .grip { margin-right: 2px; height: 14px; }
.tb { width: 23px; height: 24px; flex: none; display: flex; flex-direction: column; align-items: center; justify-content: center; border: 1px solid transparent; }
.tb svg { width: 16px; height: 16px; }
.tb.on { background: #d3d5dc; border-color: #0a246a; }
.par { justify-content: flex-start; padding-top: 1px; }
.par span { font: 8px/9px var(--arial); }
.tb.par svg { height: 9px; }
.sep { width: 2px; height: 16px; margin: 0 2px; flex: none; background: linear-gradient(90deg, #999 50%, #fff 50%); }
.drop { width: 11px; height: 24px; flex: none; display: grid; place-items: center; }
.drop::before { content: ""; border: 3px solid transparent; border-top-color: #000; border-bottom: 0; }
.tbselect { flex: none; width: 99px; height: 21px; margin: 0 1px; appearance: none; border: 1px solid var(--shadow); background: var(--face) url("data:image/svg+xml,%3Csvg xmlns='http://www.w3.org/2000/svg' width='12' height='12'%3E%3Cpath d='M3 5h6l-3 3z' fill='%23808080'/%3E%3C/svg%3E") right center no-repeat; }
.more { width: 11px; height: 25px; margin-left: auto; background: #8a8883; }
.more svg { width: 11px; height: 24px; }

.bands { flex: none; margin-left: 65px; border-left: 1px solid var(--shadow); padding-left: 6px; padding-top: 1px; }
.band { display: grid; align-items: center; height: 29px; position: relative; }
.band::before { content: ""; position: absolute; left: -4px; top: 3px; width: 3px; height: 24px; border: 1px solid; border-color: #fff var(--shadow) var(--shadow) #fff; }
.band1 { grid-template-columns: 45px 41px 187px 43px 36px 119px 41px 192px 33px 82px 10px 174px; border-bottom: 1px solid var(--shadow); }
.band2 { grid-template-columns: 65px 287px 42px 139px 42px 38px 92px 32px 82px 29px 58px 98px; }
.band label { white-space: nowrap; line-height: 12px; padding-left: 1px; }
.combo { appearance: none; height: 20px; min-width: 0; width: 100%; padding-left: 3px; font-size: 12px; border: 2px solid; border-color: var(--shadow) #fff #fff var(--shadow); box-shadow: inset 1px 1px var(--dark); background: #fff url("data:image/svg+xml,%3Csvg xmlns='http://www.w3.org/2000/svg' width='16' height='16' shape-rendering='crispEdges'%3E%3Cpath d='M0 0h16v16H0z' fill='%23404040'/%3E%3Cpath d='M0 0h15v15H0z' fill='%23808080'/%3E%3Cpath d='M0 0h14v14H0z' fill='%23fff'/%3E%3Cpath d='M1 1h13v13H1z' fill='%23d4d0c8'/%3E%3Cpath d='M4 6h7l-3.500 4z' fill='%23000'/%3E%3C/svg%3E") right center no-repeat; }
.combo.and { margin-left: 3px; width: auto; font-size: 11px; padding-left: 2px; }
.combo.off { background-color: var(--face); color: var(--shadow); text-align: center; opacity: 1; padding-right: 18px; background-image: url("data:image/svg+xml,%3Csvg xmlns='http://www.w3.org/2000/svg' width='16' height='16' shape-rendering='crispEdges'%3E%3Cpath d='M0 0h16v16H0z' fill='%23404040'/%3E%3Cpath d='M0 0h15v15H0z' fill='%23808080'/%3E%3Cpath d='M0 0h14v14H0z' fill='%23fff'/%3E%3Cpath d='M1 1h13v13H1z' fill='%23d4d0c8'/%3E%3Cpath d='M5 7h7l-3.500 4z' fill='%23fff'/%3E%3Cpath d='M4 6h7l-3.500 4z' fill='%23808080'/%3E%3C/svg%3E"); }
.to { white-space: nowrap; }
.btn { height: 20px; background: var(--face); border: 1px solid; border-color: #fff var(--dark) var(--dark) #fff; box-shadow: inset -1px -1px var(--shadow); white-space: nowrap; }
.btn.default { border-color: #000; box-shadow: inset 1px 1px #fff, inset -1px -1px var(--dark), inset -2px -2px var(--shadow); }
.boxed { display: flex; align-items: center; gap: 1px; height: 26px; padding: 1px; border: 1px solid #000; }
.boxed .btn { padding: 0 3px; }
.boxed .combo { width: 0; }
.band2 .boxed { margin-left: 2px; padding-left: 2px; }
.chk { appearance: none; width: 12px; height: 12px; background: #fff; border: 1px solid; border-color: var(--shadow) #fff #fff var(--shadow); box-shadow: inset 1px 1px var(--dark); align-self: flex-start; margin-top: 5px; }

.work { flex: 338 1 0; min-height: 0; display: flex; gap: 4px; }
.side { width: 252px; flex: none; display: flex; flex-direction: column; }
.panehead { display: flex; align-items: center; gap: 8px; flex: none; height: 19px; padding: 1px 8px 0 5px; margin-top: 1px; background: linear-gradient(#dcd9d3, #f0efec 60%, #d8d5ce); }
.panehead h2 { flex: 1; font-family: var(--ui); font-weight: bold; }
.panehead svg, .navs svg { width: 10px; height: 10px; }
svg.x, .wb svg.x, .mdibtns svg.x, .panehead svg.x, .navs svg.x { width: 8px; height: 8px; }
.treebox { flex: 1; min-height: 0; margin: 3px 0 0 4px; background: #fff; border: 1px solid #000; border-right: 4px double #222; border-bottom: 3px double #222; }
.tree { padding-top: 2px; font-weight: bold; font-size: 12px; }
.tree li { display: flex; align-items: center; height: 16px; padding-left: 8px; gap: 2px; }
.tree li.root { padding-left: 3px; gap: 4px; }
.tree li > span { padding-left: 1px; }
.tree .sel { background: var(--face); padding: 0 5px 0 1px; line-height: 16px; }
.twig { width: 1px; border-top: 1px dotted var(--shadow); }
.exp { width: 9px; height: 9px; flex: none; border: 1px solid var(--shadow); background: linear-gradient(#000, #000) center / 5px 1px no-repeat, linear-gradient(#000, #000) center / 1px 5px no-repeat #fff; }
.sidetabs { display: flex; align-items: flex-start; flex: none; height: 31px; padding-left: 10px; }
.stab { height: 21px; width: 31px; display: flex; align-items: center; justify-content: center; border: solid; border-width: 0 2px 2px 1px; border-color: #222 #222 #222 #fff; border-radius: 0 0 3px 3px; background: var(--face); }
.stab.narrow { width: 28px; }
.stab.active { width: 37px; height: 24px; margin-top: -1px; padding-right: 6px; }

.doc { flex: 1; min-width: 0; display: flex; flex-direction: column; padding-bottom: 5px; }
.doctabs { display: flex; align-items: flex-end; flex: none; height: 22px; padding: 0 4px 0 6px; background: linear-gradient(var(--face), #e9e7e3); }
.doctab { display: flex; height: 19px; }
.slope { width: 20px; height: 19px; shape-rendering: auto; }
.doctab-body { display: flex; align-items: center; gap: 2px; padding-right: 5px; height: 19px; background: linear-gradient(#dde6f6, #86a7e0); border-top: 1px solid #fff; border-right: 1px solid #555; font: bold 11px/14px var(--ui); }
.navs { margin-left: auto; display: flex; align-items: center; gap: 4px; align-self: center; }
.docframe { flex: 1; min-height: 0; display: flex; flex-direction: column; padding: 3px 4px 4px 5px; border: 1px solid var(--shadow); box-shadow: inset 0 0 0 1px #8aa8e0, inset 2px 2px #555; }
.subtabs { display: flex; align-items: center; flex: none; height: 19px; background: #f5f1e9; padding-right: 6px; }
.subtab { height: 19px; padding: 0 6px 0 4px; background: var(--face); border-right: 1px solid #000; border-top: 1px solid #fff; font-size: 12px; }
.listbox { flex: 1; min-height: 0; margin-top: 1px; display: grid; grid-template-columns: minmax(0, 1fr) 16px; grid-template-rows: minmax(0, 1fr) 16px; border: 2px solid; border-color: var(--shadow) #fff #777 var(--shadow); background: var(--face); }
.rows { overflow: hidden; background: #adadad; }
table { border-collapse: separate; border-spacing: 0; table-layout: fixed; width: 100%; }
th { height: 17px; padding: 0 0 0 3px; font-weight: normal; text-align: left; white-space: nowrap; overflow: hidden; background: var(--face); border: 1px solid; border-color: #fff #555 #777 #fff; line-height: 14px; font-size: 11px; }
th .ic { height: 15px; margin: 0 auto; }
.articles th:last-child { padding-left: 1px; }
.c-ic { width: 21px; } .c-sub { width: 451px; } .c-aut { width: 79px; } .c-age { width: 140px; } .c-size { width: 49px; } .c-parts { width: 55px; }
.sorted { position: relative; }
.sorted::after { content: ""; position: absolute; right: 5px; top: 6px; border: 4px solid transparent; border-top: 5px solid var(--shadow); border-bottom: 0; }
td { height: 15px; padding: 0 1px; font-weight: bold; font-size: 11px; line-height: 15px; white-space: nowrap; overflow: hidden; }
td:first-child { padding: 0 0 0 5px; }
td:first-child .ic { height: 15px; }
td:nth-child(4) { text-align: center; } td:nth-child(5) { text-align: right; padding-right: 2px; } td:nth-child(6) { text-align: center; }
.focus td { background: linear-gradient(90deg, #555 50%, transparent 50%) 0 0 / 2px 1px repeat-x, linear-gradient(90deg, #555 50%, transparent 50%) 0 100% / 2px 1px repeat-x; }
.vbar, .hbar { display: flex; background: repeating-conic-gradient(#fff 0 25%, var(--face) 0 50%) 0 0 / 2px 2px; }
.vbar { flex-direction: column; width: 16px; }
.hbar { height: 16px; flex: none; }
.corner { background: var(--face); }
.sb, .thumb { background-color: var(--face); border: 1px solid; border-color: #fff var(--dark) var(--dark) #fff; box-shadow: inset -1px -1px var(--shadow); }
.sb { width: 16px; height: 16px; flex: none; display: grid; place-items: center; }
.sb::before { content: ""; border: 4px solid transparent; }
.up::before { border-top: 0; border-bottom-color: #000; }
.down::before { border-bottom: 0; border-top-color: #000; }
.left::before { border-left: 0; border-right-color: #000; }
.right::before { border-right: 0; border-left-color: #000; }
.right { margin-left: auto; }
.down { margin-top: auto; }
.vt-list { height: 166px; } .ht-list { width: 72%; } .ht-task { width: 79.5%; }

.tasks { flex: 209 1 0; min-height: 0; display: flex; flex-direction: column; }
.taskbox { flex: 1; min-height: 0; margin: 3px 4px 0 4px; display: flex; flex-direction: column; background: #fff; border: 2px solid #111; border-right: 4px double #111; border-bottom: 3px double #333; }
.t-a { width: 18px; } .t-b { width: 20px; } .t-name { width: 505px; } .t-st { width: 57px; }
.tasktable { flex: none; }
.tasktable th { padding-left: 1px; height: 18px; }
.tasktable th:last-child { padding-left: 5px; }
.tasktable th:nth-child(-n+2) { padding: 0; }
.taskbody { flex: 1; position: relative; min-height: 0; }
.note { position: absolute; left: 311px; top: 24px; text-align: center; white-space: nowrap; font: bold 13px/16px var(--arial); color: #e8112d; text-shadow: 1px 1px 1px #bbb; }
.arrow { position: absolute; left: 579px; top: 8px; width: 44px; height: 44px; shape-rendering: auto; }

.bottabs { display: flex; align-items: flex-start; flex: none; height: 29px; padding-left: 13px; font-size: 12px; }
.bt { display: flex; align-items: center; gap: 2px; flex: none; height: 22px; padding-left: 6px; background: var(--face); border: solid; border-width: 0 1px 2px 1px; border-color: #000 #777 #222 #fff; border-radius: 0 0 3px 3px; white-space: nowrap; }
.bt.w-art { padding-left: 5px; gap: 1px; }
.bt.w-i { padding-left: 5px; }
.bt.active { height: 25px; font-weight: bold; padding-left: 4px; gap: 4px; margin-top: -1px; border-right: 2px solid #000; }
.bt.tight { padding-left: 3px; }
.bt.q { justify-content: center; padding: 0; color: var(--shadow); font-weight: bold; font-style: italic; }
.w-art { width: 72px; } .w-con { width: 84px; } .w-dl { width: 103px; } .w-arts { width: 79px; } .w-i { width: 31px; } .w-save { width: 59px; } .w-unp { width: 84px; } .w-ng { width: 72px; } .w-post { width: 69px; }

.status { display: flex; align-items: stretch; gap: 2px; flex: none; height: 19px; font-family: var(--ui); }
.sp { border: 1px solid; border-color: var(--shadow) #fff #fff var(--shadow); line-height: 17px; white-space: nowrap; }
.sp.flat { border-color: #dedbd4; }
.main { flex: 1; min-width: 0; overflow: hidden; }
.s1 { width: 256px; } .s2 { width: 106px; } .s3 { width: 26px; } .s4 { width: 28px; text-align: center; } .s5 { width: 33px; }
.sizegrip { width: 14px; height: 14px; align-self: flex-end; shape-rendering: auto; }

.dialog { position: absolute; left: 650px; top: 266px; width: 401px; background: var(--face); font: 11px/13px var(--ui); border: 1px solid; border-color: var(--face) var(--dark) var(--dark) var(--face); box-shadow: inset 1px 1px #fff, inset -1px -1px var(--shadow); padding: 3px; }
.dlgtitle { display: flex; align-items: center; height: 18px; padding: 0 2px 0 1px; background: linear-gradient(90deg, #0a246a, #a6caf0); }
.dlgtitle h2 { flex: 1; color: #fff; font-weight: bold; }
.dlgbody { padding: 12px 15px 11px 14px; }
.folders { display: flex; height: 119px; margin: 21px 0 0 3px; background: #fff; border: 2px solid; border-color: var(--shadow) #fff #fff var(--shadow); box-shadow: inset 1px 1px var(--dark); }
.folders ul { flex: 1; overflow: hidden; }
.folders li { display: flex; align-items: center; gap: 4px; height: 17px; padding-left: 60px; }
.folders li.has { padding-left: 45px; gap: 5px; }
.has .fi { margin-left: 1px; margin-right: -1px; }
.fi { width: 16px; height: 14px; shape-rendering: auto; }
.vt-dlg { height: 8px; margin-top: 31px; }
.frow { display: flex; align-items: center; justify-content: space-between; margin-top: 13px; }
.frow label { padding-top: 4px; }
.field { display: flex; align-items: center; width: 310px; height: 23px; background: #fff; border: 2px solid; border-color: var(--shadow) #fff #fff var(--shadow); box-shadow: inset 1px 1px var(--dark); padding: 0 0 2px 3px; }
.field input { field-sizing: content; height: 15px; }
.caret { width: 1px; height: 13px; background: #000; }
.dlgbtns { display: flex; gap: 6px; margin-top: 13px; }
.dlgbtns .btn { width: 75px; height: 23px; }
.dlgbtns .suggest { width: 106px; margin-right: auto; }
.dlggrip { position: absolute; right: 2px; bottom: 2px; width: 12px; height: 12px; }
```
